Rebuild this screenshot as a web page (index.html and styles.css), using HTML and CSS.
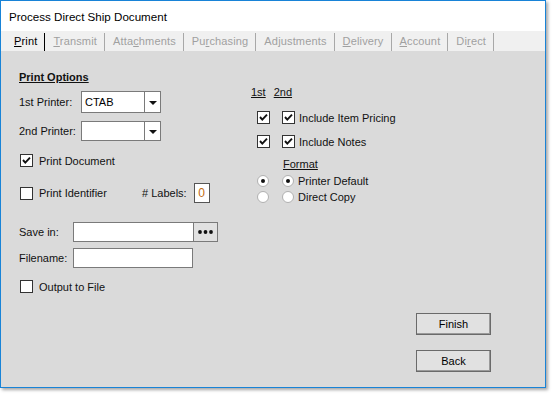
FILE: index.html
```html
<!DOCTYPE html>
<html>
<head>
<meta charset="utf-8">
<link rel="stylesheet" href="styles.css">
</head>
<body>
<div class="window">
  <div class="titlebar">Process Direct Ship Document</div>
  <div class="tabs">
    <span class="tab active"><u>P</u>rint</span>
    <span class="tab"><u>T</u>ransmit</span>
    <span class="tab">Atta<u>c</u>hments</span>
    <span class="tab">Pu<u>r</u>chasing</span>
    <span class="tab">Ad<u>j</u>ustments</span>
    <span class="tab"><u>D</u>elivery</span>
    <span class="tab"><u>A</u>ccount</span>
    <span class="tab">Di<u>r</u>ect</span>
  </div>
  <div class="content">
    <div class="left">
      <div class="heading">Print Options</div>
      <div class="row r-combo1">
        <span class="lbl w62">1st Printer:</span>
        <div class="combo tall"><span class="combo-text">CTAB</span><span class="combo-btn"><span class="tri"></span></span></div>
      </div>
      <div class="row r-combo2">
        <span class="lbl w62">2nd Printer:</span>
        <div class="combo"><span class="combo-text"></span><span class="combo-btn"><span class="tri"></span></span></div>
      </div>
      <div class="check r-printdoc">
        <span class="box"><svg viewBox="0 0 11 11" width="11" height="11"><polyline points="2,5 4.3,7.6 9,2.6" fill="none" stroke="#111" stroke-width="1.9"/></svg></span>
        <span class="check-lbl">Print Document</span>
      </div>
      <div class="row r-ident">
        <div class="check ident-group">
          <span class="box"></span>
          <span class="check-lbl">Print Identifier</span>
        </div>
        <span class="lbl">#&nbsp;Labels:</span>
        <span class="num">0</span>
      </div>
      <div class="row r-save">
        <span class="lbl w54">Save in:</span>
        <span class="field save-field"></span>
        <span class="dots"><svg viewBox="0 0 23 18" width="23" height="18"><circle cx="6" cy="9" r="1.9" fill="#111"/><circle cx="11.5" cy="9" r="1.9" fill="#111"/><circle cx="17" cy="9" r="1.9" fill="#111"/></svg></span>
      </div>
      <div class="row r-file">
        <span class="lbl w54">Filename:</span>
        <span class="field file-field"></span>
      </div>
      <div class="check r-output">
        <span class="box"></span>
        <span class="check-lbl">Output to File</span>
      </div>
    </div>
    <div class="right">
      <div class="colheads"><u>1st</u><u class="second">2nd</u></div>
      <div class="opt r-opt1">
        <span class="box b1"><svg viewBox="0 0 11 11" width="11" height="11"><polyline points="2,5 4.3,7.6 9,2.6" fill="none" stroke="#111" stroke-width="1.9"/></svg></span>
        <span class="box b2"><svg viewBox="0 0 11 11" width="11" height="11"><polyline points="2,5 4.3,7.6 9,2.6" fill="none" stroke="#111" stroke-width="1.9"/></svg></span>
        <span class="check-lbl">Include Item Pricing</span>
      </div>
      <div class="opt r-opt2">
        <span class="box b1"><svg viewBox="0 0 11 11" width="11" height="11"><polyline points="2,5 4.3,7.6 9,2.6" fill="none" stroke="#111" stroke-width="1.9"/></svg></span>
        <span class="box b2"><svg viewBox="0 0 11 11" width="11" height="11"><polyline points="2,5 4.3,7.6 9,2.6" fill="none" stroke="#111" stroke-width="1.9"/></svg></span>
        <span class="check-lbl">Include Notes</span>
      </div>
      <div class="format"><u>Format</u></div>
      <div class="opt r-rad1">
        <span class="radio r1 on"></span>
        <span class="radio r2 on"></span>
        <span class="radio-lbl">Printer Default</span>
      </div>
      <div class="opt r-rad2">
        <span class="radio r1"></span>
        <span class="radio r2"></span>
        <span class="radio-lbl">Direct Copy</span>
      </div>
      <div class="actions">
        <div class="btn">Finish</div>
        <div class="btn back">Back</div>
      </div>
    </div>
  </div>
</div>
</body>
</html>
```
FILE: styles.css
```css
* { box-sizing: border-box; }
html, body { margin: 0; padding: 0; background: #ffffff; }
body {
  font-family: "Liberation Sans", Arial, sans-serif;
  font-size: 11px;
  color: #111111;
  width: 553px;
  height: 396px;
  overflow: hidden;
}
.window {
  width: 546px;
  height: 388px;
  border: 1px solid #1883d7;
  box-shadow: 2px 2px 3px rgba(0, 0, 0, 0.35);
  display: flex;
  flex-direction: column;
  background: #dadada;
}
.titlebar {
  height: 30px;
  background: #ffffff;
  padding-left: 8px;
  font-size: 11.6px;
  line-height: 31px;
  color: #000;
}
.tabs {
  height: 20px;
  background: #f0f0f0;
  display: flex;
  align-items: flex-end;
  padding-left: 5px;
}
.tab {
  height: 18px;
  line-height: 17px;
  padding: 0 7px 0 8px;
  border-right: 1px solid #a8a8a8;
  color: #a0a0a0;
  white-space: nowrap;
  font-size: 11px;
  letter-spacing: 0.15px;
}
.tab.active { color: #000; border-right-color: #000; }
.content {
  flex: 1;
  display: flex;
}
.left {
  width: 250px;
  padding-left: 18px;
  display: flex;
  flex-direction: column;
}
.heading {
  margin-top: 20px;
  height: 13px;
  line-height: 13px;
  font-weight: bold;
  text-decoration: underline;
}
.row { display: flex; align-items: center; }
.lbl { white-space: nowrap; }
.w62 { width: 62px; }
.w54 { width: 54px; }
.r-combo1 { margin-top: 7px; height: 22px; }
.r-combo2 { margin-top: 8px; height: 20px; }
.combo {
  width: 80px;
  height: 20px;
  background: #fff;
  border: 1px solid #7a7a7a;
  display: flex;
}
.combo.tall { height: 22px; }
.combo-text { flex: 1; padding-left: 3px; line-height: 19px; color: #000; }
.combo.tall .combo-text { line-height: 21px; }
.combo-btn {
  width: 16px;
  border-left: 1px solid #7a7a7a;
  display: flex;
  align-items: center;
  justify-content: center;
}
.tri {
  width: 0; height: 0;
  border-left: 4px solid transparent;
  border-right: 4px solid transparent;
  border-top: 4px solid #111;
  margin-top: 1px;
}
.check { display: flex; align-items: center; height: 13px; }
.box {
  width: 13px;
  height: 13px;
  background: #fff;
  border: 1px solid #333;
  display: flex;
  align-items: center;
  justify-content: center;
  flex: none;
}
.check .box { margin-left: 1px; }
.check-lbl { margin-left: 6px; white-space: nowrap; }
.r-printdoc { margin-top: 13px; }
.r-ident { margin-top: 16px; height: 20px; }
.ident-group { width: 123px; }
.num {
  margin-left: 7px;
  width: 16px;
  height: 20px;
  background: #fff;
  border: 1px solid #555;
  color: #c06a10;
  text-align: center;
  line-height: 19px;
  font-size: 12px;
}
.r-save { margin-top: 19px; height: 20px; }
.r-file { margin-top: 6px; height: 20px; }
.field {
  height: 20px;
  background: #fff;
  border: 1px solid #7a7a7a;
}
.save-field { width: 121px; }
.file-field { width: 120px; }
.dots {
  width: 24px;
  height: 20px;
  background: #e1e1e1;
  border: 1px solid #7a7a7a;
  border-left: none;
  display: flex;
  align-items: center;
  justify-content: center;
}
.r-output { margin-top: 12px; }
.right {
  flex: 1;
  display: flex;
  flex-direction: column;
}
.colheads {
  margin-top: 35px;
  height: 13px;
  line-height: 13px;
  white-space: nowrap;
}
.colheads .second { margin-left: 8px; }
.opt { display: flex; align-items: center; }
.r-opt1 { margin-top: 12px; height: 13px; }
.r-opt2 { margin-top: 11px; height: 13px; }
.opt .b1 { margin-left: 6px; }
.opt .b2 { margin-left: 12px; }
.opt .check-lbl { margin-left: 4px; }
.format {
  margin-top: 10px;
  margin-left: 32px;
  height: 13px;
  line-height: 13px;
}
.r-rad1 { margin-top: 4px; height: 12px; }
.r-rad2 { margin-top: 4px; height: 12px; }
.radio {
  width: 12px;
  height: 12px;
  border-radius: 50%;
  background: #fff;
  border: 1px solid #b0b0b0;
  display: flex;
  align-items: center;
  justify-content: center;
  flex: none;
}
.radio.on::after {
  content: "";
  width: 4px;
  height: 4px;
  border-radius: 50%;
  background: #111;
}
.radio.r1 { margin-left: 6px; }
.radio.r2 { margin-left: 13px; }
.radio-lbl { margin-left: 4px; white-space: nowrap; }
.actions {
  margin-top: 110px;
  margin-left: 165px;
  display: flex;
  flex-direction: column;
}
.btn {
  width: 75px;
  height: 22px;
  background: #e1e1e1;
  border: 1px solid #6a6a6a;
  box-shadow: inset -1px -1px 0 #9a9a9a;
  text-align: center;
  line-height: 20px;
  color: #000;
}
.btn.back { margin-top: 15px; }
```
